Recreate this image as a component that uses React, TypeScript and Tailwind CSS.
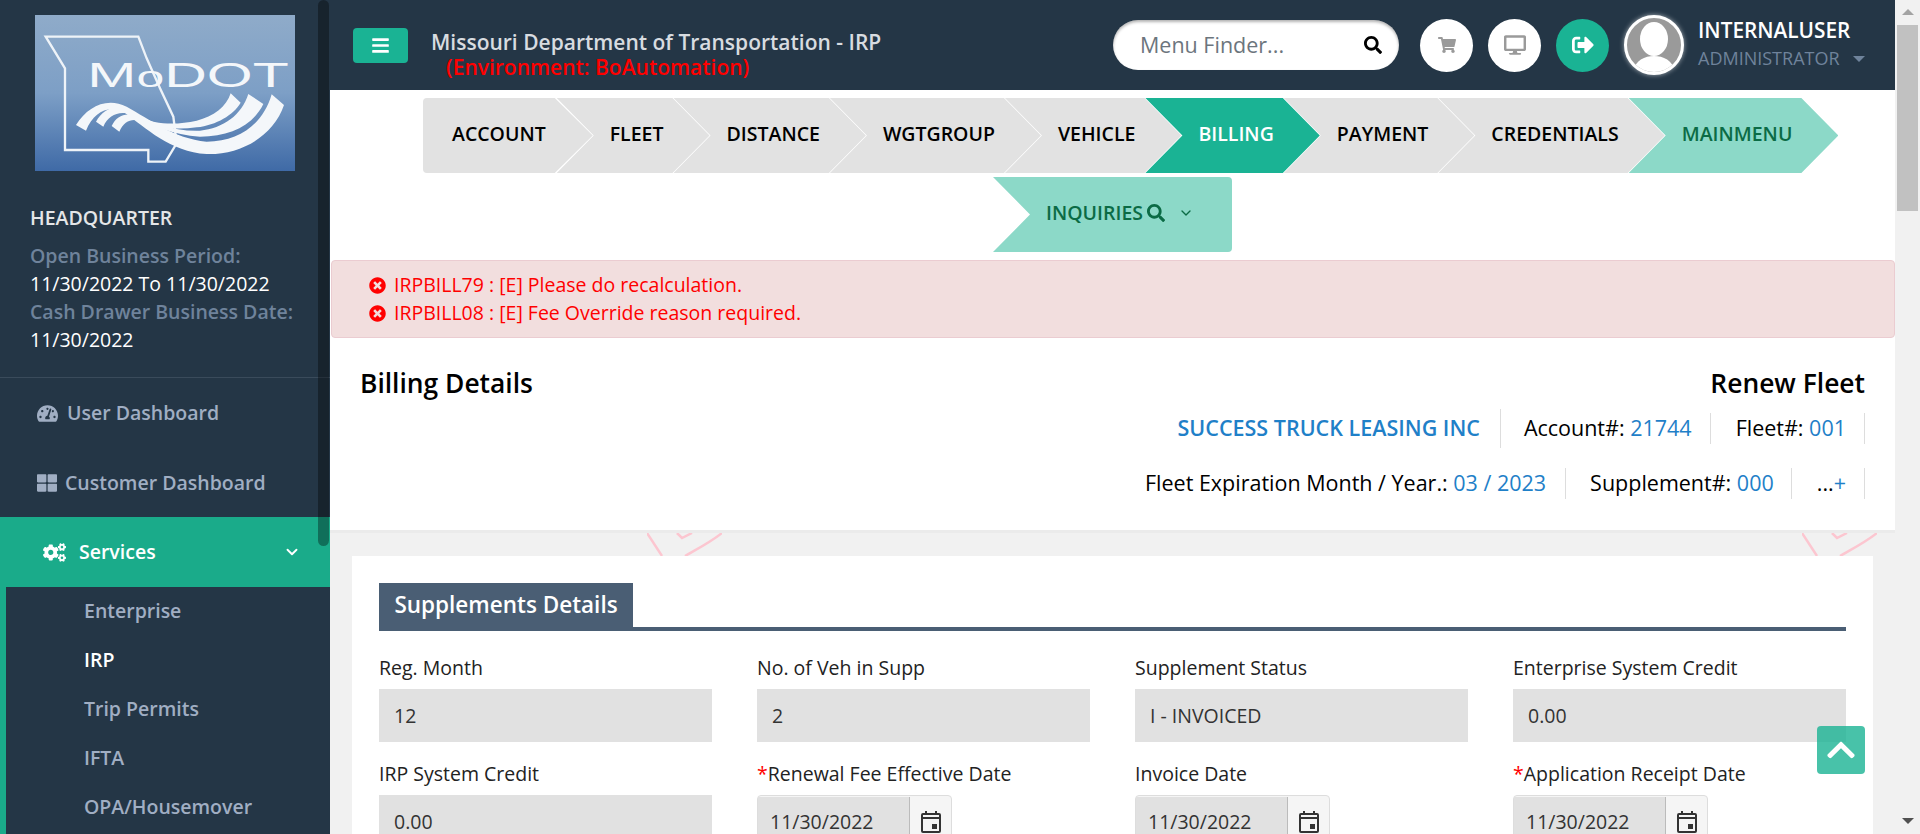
import React from "react";
import { ChevronDown } from "lucide-react";
import {
  FaBars,
  FaChevronUp,
  FaCogs,
  FaDesktop,
  FaSearch,
  FaShoppingCart,
  FaSignOutAlt,
  FaTachometerAlt,
  FaThLarge,
  FaTimesCircle,
} from "react-icons/fa";

const crumbs = ["FLEET", "DISTANCE", "WGTGROUP", "VEHICLE", "BILLING", "PAYMENT", "CREDENTIALS", "MAINMENU"];

const Logo = () => (
  <div className="w-[260px] h-[156px] ml-[35px] bg-gradient-to-b from-[#8fabc9] via-[#7d9fc6] to-[#3f6aa6]">
    <svg viewBox="105 45 780 468" width="260" height="156">
      <path
        d="M137 110 L415 110 L440 175 L480 265 L520 350 L530 430 L497 485 L445 485 L445 450 L195 450 L195 205 Z"
        fill="none"
        stroke="#eef3f8"
        strokeWidth="7"
      />
      <text x="262" y="262" fill="#f4f7fa" fontFamily="Liberation Sans" fontSize="104" textLength="604" lengthAdjust="spacingAndGlyphs">
        M<tspan fontSize="88">o</tspan>DOT
      </text>
      <path d="M228 375 C262 320 320 290 380 320 C450 358 520 415 620 425 C720 425 790 370 815 283 L852 315 C820 410 720 465 620 462 C510 455 440 385 370 335 C325 315 280 335 258 392 Z" fill="#f4f7fa" />
      <path d="M288 365 C310 325 350 310 395 335 C450 365 520 395 600 392 C670 385 725 345 745 282 L790 312 C760 375 690 410 600 410 C520 405 450 375 395 345 C360 330 325 345 310 380 Z" fill="#f4f7fa" />
      <path d="M335 378 C350 345 380 335 415 350 C470 375 530 375 590 362 C640 350 680 320 692 280 L722 308 C700 345 650 375 590 382 C530 390 465 385 415 362 C395 355 370 365 358 395 Z" fill="#f4f7fa" />
    </svg>
  </div>
);

const SubItem = ({ label, active }: { label: string; active?: boolean }) => (
  <div className={`h-[49px] pb-[1px] flex items-center pl-[84px] text-[19.5px] font-semibold ${active ? "text-white" : "text-[#a0aec3]"}`}>
    {label}
  </div>
);

const Sidebar = () => (
  <aside className="relative w-[330px] shrink-0 bg-[#243646] overflow-hidden">
    <div className="pt-[15px]">
      <Logo />
    </div>
    <div className="pl-[30px] pt-[33px] h-[207px] border-b border-[#3a4b5b] text-[19.5px] leading-[28px]">
      <div className="font-semibold text-[#e4e6e8] mb-[10px]">HEADQUARTER</div>
      <div className="font-semibold text-[#6f839b]">Open Business Period:</div>
      <div className="text-white">11/30/2022 To 11/30/2022</div>
      <div className="font-semibold text-[#6f839b]">Cash Drawer Business Date:</div>
      <div className="text-white">11/30/2022</div>
    </div>
    <div className="h-[70px] flex items-center pl-[37px] gap-[9px] text-[19.5px] font-semibold text-[#a0aec3]">
      <FaTachometerAlt size={21} />
      User Dashboard
    </div>
    <div className="h-[69px] flex items-center pl-[37px] gap-[8px] text-[19.5px] font-semibold text-[#a0aec3]">
      <FaThLarge size={20} />
      Customer Dashboard
    </div>
    <div className="h-[70px] bg-[#1aab8a] flex items-center pl-[43px] pr-[29px] text-[19.5px] font-semibold text-white">
      <FaCogs size={23} />
      <span className="ml-[13px] flex-1">Services</span>
      <ChevronDown size={18} strokeWidth={2.5} />
    </div>
    <div className="border-l-[6px] border-[#1aab8a] pb-[20px] [&>div]:-ml-[6px]">
      <SubItem label="Enterprise" />
      <SubItem label="IRP" active />
      <SubItem label="Trip Permits" />
      <SubItem label="IFTA" />
      <SubItem label="OPA/Housemover" />
    </div>
    <div className="absolute top-0 left-[318px] w-[11px] h-[546px] rounded-[6px] bg-black/35" />
  </aside>
);

const Topbar = () => (
  <header className="h-[90px] bg-[#243646] flex items-center">
    <button className="ml-[23px] w-[55px] h-[35px] rounded-[4px] bg-[#1ab394] flex items-center justify-center text-white">
      <FaBars size={19} />
    </button>
    <div className="ml-[23px] text-[21px] leading-[25px] w-[682px] font-semibold text-[#d8dce0] pt-[19px]">
      <div>Missouri Department of Transportation - IRP</div>
      <div className="pl-[15px] text-[#ff0000]">(Environment: BoAutomation)</div>
    </div>
    <div className="w-[286px] h-[50px] rounded-full bg-white shadow-[inset_0_2px_3px_rgba(0,0,0,0.3)] flex items-center pl-[27px] pr-[17px] text-[21.5px] text-[#6c757d]">
      <span className="flex-1">Menu Finder...</span>
      <FaSearch size={18} className="text-black" />
    </div>
    <button className="ml-[21px] w-[53px] h-[53px] rounded-full bg-white flex items-center justify-center text-[#9a9a9a]">
      <FaShoppingCart size={18} />
    </button>
    <button className="ml-[15px] w-[53px] h-[53px] rounded-full bg-white flex items-center justify-center text-[#9a9a9a]">
      <FaDesktop size={22} />
    </button>
    <button className="ml-[15px] w-[53px] h-[53px] rounded-full bg-[#1ab394] flex items-center justify-center text-white">
      <FaSignOutAlt size={22} />
    </button>
    <div className="ml-[15px] w-[60px] h-[60px] rounded-full border-[3px] border-white bg-[#9a9a9a] overflow-hidden shadow-[0_0_5px_rgba(255,255,255,0.6)]">
      <svg viewBox="0 0 54 54" width="54" height="54">
        <ellipse cx="27" cy="21" rx="14" ry="17" fill="#fff" />
        <path d="M6 54 C8 42 18 38 27 38 C36 38 46 42 48 54 Z" fill="#fff" />
      </svg>
    </div>
    <div className="ml-[14px] -mt-[3px]">
      <div className="text-[20.8px] leading-[26px] font-semibold text-white">INTERNALUSER</div>
      <div className="flex items-center text-[18px] leading-[26px] text-[#6f839b] mt-[2px]">
        ADMINISTRATOR
        <span className="ml-[13px] mt-[2px] border-x-[6px] border-t-[6px] border-x-transparent border-t-[#6f839b]" />
      </div>
    </div>
  </header>
);

const Breadcrumb = () => (
  <nav className="pt-[8px] text-[19.5px] font-semibold">
    <div className="flex pl-[93px]">
      <div className="h-[75px] pl-[29px] pr-[47px] pb-[3px] flex items-center rounded-l-[4px] bg-[#e2e2e2] text-black [clip-path:polygon(0_0,calc(100%-38px)_0,100%_50%,calc(100%-38px)_100%,0_100%)]">
        ACCOUNT
      </div>
      {crumbs.map((c) => (
        <div
          key={c}
          className={`h-[75px] -ml-[36px] pl-[53px] pr-[46px] pb-[3px] flex items-center [clip-path:polygon(0_0,calc(100%-37px)_0,100%_50%,calc(100%-37px)_100%,0_100%,37px_50%)] ${
            c === "BILLING"
              ? "bg-[#1ab394] text-white"
              : c === "MAINMENU"
                ? "bg-[#8cd9c8] text-[#0b6b45]"
                : "bg-[#e2e2e2] text-black"
          }`}
        >
          {c}
        </div>
      ))}
    </div>
    <div className="flex pl-[663px] mt-[4px]">
      <div className="h-[75px] w-[239px] pl-[53px] pb-[3px] flex items-center rounded-r-[4px] bg-[#8cd9c8] text-[#0b6b45] [clip-path:polygon(0_0,100%_0,100%_100%,0_100%,37px_50%)]">
        INQUIRIES
        <FaSearch size={18} className="ml-[4px]" />
        <ChevronDown size={16} className="ml-[13px]" />
      </div>
    </div>
  </nav>
);

const Alerts = () => (
  <div className="mt-[8px] h-[78px] ml-[1px] py-[10px] pl-[37px] rounded-[4px] border border-[#ebccd1] bg-[#f2dede] text-[19.5px] leading-[28px] text-[#ff0000]">
    <div className="flex items-center gap-[8px]">
      <FaTimesCircle size={17} />
      IRPBILL79 : [E] Please do recalculation.
    </div>
    <div className="flex items-center gap-[8px]">
      <FaTimesCircle size={17} />
      IRPBILL08 : [E] Fee Override reason required.
    </div>
  </div>
);

const Info = ({ label, value, className }: { label?: string; value: string; className?: string }) => (
  <div className={`border-r border-[#ddd] h-[31px] flex items-center whitespace-pre ${className ?? ""}`}>
    {label && <span className="text-black">{label} </span>}
    <span className="text-[#1f80c8]">{value}</span>
  </div>
);

const TitleBlock = () => (
  <section className="relative h-[192px] bg-white shadow-[0_3px_0_#ebebeb] pl-[30px] pr-[30px] pt-[25px] text-[21.5px]">
    <div className="flex justify-between text-[26.4px] font-semibold leading-[40px] text-black">
      <span>Billing Details</span>
      <span>Renew Fleet</span>
    </div>
    <div className="flex justify-end items-center mt-[6px]">
      <div className="pr-[20px] border-r border-[#ddd] h-[39px] flex items-center font-semibold text-[#1f80c8]">SUCCESS TRUCK LEASING INC</div>
      <Info label="Account#:" value="21744" className="pl-[23px] pr-[18px]" />
      <Info label="Fleet#:" value="001" className="pl-[25px] pr-[18px]" />
    </div>
    <div className="flex justify-end items-center mt-[20px]">
      <Info label="Fleet Expiration Month / Year.:" value="03 / 2023" className="pr-[19px]" />
      <Info label="Supplement#:" value="000" className="pl-[24px] pr-[17px]" />
      <div className="border-r border-[#ddd] h-[31px] flex items-center pl-[25px] pr-[18px]">
        ...<span className="text-[#1f80c8]">+</span>
      </div>
    </div>
  </section>
);

const Field = ({ label, value, required }: { label: string; value: string; required?: boolean }) => (
  <div>
    <div className="text-[19.5px] leading-[28px] text-[#222]">
      {required && <span className="text-[#ff0000]">*</span>}
      {label}
    </div>
    <div className="mt-[7px] h-[53px] bg-[#e1e1e1] pl-[15px] flex items-center text-[19.5px] text-[#333]">{value}</div>
  </div>
);

const CalendarIcon = () => (
  <svg viewBox="0 0 20 22" width="20" height="22" fill="none" stroke="#333" strokeWidth="2">
    <rect x="1" y="3" width="18" height="18" rx="1" />
    <path d="M1 7 H19 M5 0 V4 M15 0 V4" />
    <rect x="11" y="13" width="5" height="5" fill="#333" stroke="none" />
  </svg>
);

const DateField = ({ label, required }: { label: string; required?: boolean }) => (
  <div>
    <div className="text-[19.5px] leading-[28px] text-[#222]">
      {required && <span className="text-[#ff0000]">*</span>}
      {label}
    </div>
    <div className="mt-[7px] w-[195px] h-[53px] flex rounded-[4px] border border-[#ddd] bg-[#f5f5f5]">
      <div className="w-[152px] bg-[#e1e1e1] border-r border-[#bbb] mt-[1px] pl-[12px] flex items-center text-[19.5px] text-[#333]">11/30/2022</div>
      <div className="flex-1 flex items-center justify-center">
        <CalendarIcon />
      </div>
    </div>
  </div>
);

const Watermark = ({ className }: { className: string }) => (
  <svg viewBox="0 0 75 23" width="75" height="23" fill="none" stroke="#fcc6d0" strokeWidth="2.5" className={className}>
    <path d="M0 0 L15 23 M38 23 C52 15 64 9 75 0 M30 0 L35 5 L45 0" />
  </svg>
);

const Card = () => (
  <section className="relative mt-[26px] mx-[22px] bg-white px-[27px] pt-[27px] pb-[40px]">
    <div className="border-b-[4px] border-[#4a5e74]">
      <h2 className="w-[254px] h-[44px] bg-[#4a5e74] text-white text-[22.5px] font-semibold flex items-center justify-center">Supplements Details</h2>
    </div>
    <div className="grid grid-cols-4 gap-x-[45px] gap-y-[18px] mt-[23px]">
      <Field label="Reg. Month" value="12" />
      <Field label="No. of Veh in Supp" value="2" />
      <Field label="Supplement Status" value="I - INVOICED" />
      <Field label="Enterprise System Credit" value="0.00" />
      <Field label="IRP System Credit" value="0.00" />
      <DateField label="Renewal Fee Effective Date" required />
      <DateField label="Invoice Date" />
      <DateField label="Application Receipt Date" required />
    </div>
  </section>
);

const PageScrollbar = () => (
  <div className="relative w-[25px] shrink-0 bg-[#f1f1f1]">
    <div className="absolute left-[7px] top-[9px] border-x-[6px] border-b-[6px] border-x-transparent border-b-[#a3a3a3]" />
    <div className="absolute left-[2px] top-[25px] w-[21px] h-[186px] bg-[#c1c1c1]" />
    <div className="absolute left-[7px] bottom-[10px] border-x-[6px] border-t-[6px] border-x-transparent border-t-[#505050]" />
  </div>
);

export default function App() {
  return (
    <div className="relative flex h-[834px] overflow-hidden bg-[#f1f1f1] font-['Open_Sans',sans-serif]">
      <Sidebar />
      <main className="relative flex-1 min-w-0">
        <Topbar />
        <div className="bg-white">
          <Breadcrumb />
          <Alerts />
        </div>
        <TitleBlock />
        <Watermark className="absolute left-[317px] top-[533px]" />
        <Watermark className="absolute left-[1472px] top-[533px]" />
        <Card />
      </main>
      <PageScrollbar />
      <button className="absolute left-[1817px] top-[726px] w-[48px] h-[48px] rounded-[4px] bg-[#1ab394]/80 flex items-center justify-center text-white">
        <FaChevronUp size={32} />
      </button>
    </div>
  );
}
